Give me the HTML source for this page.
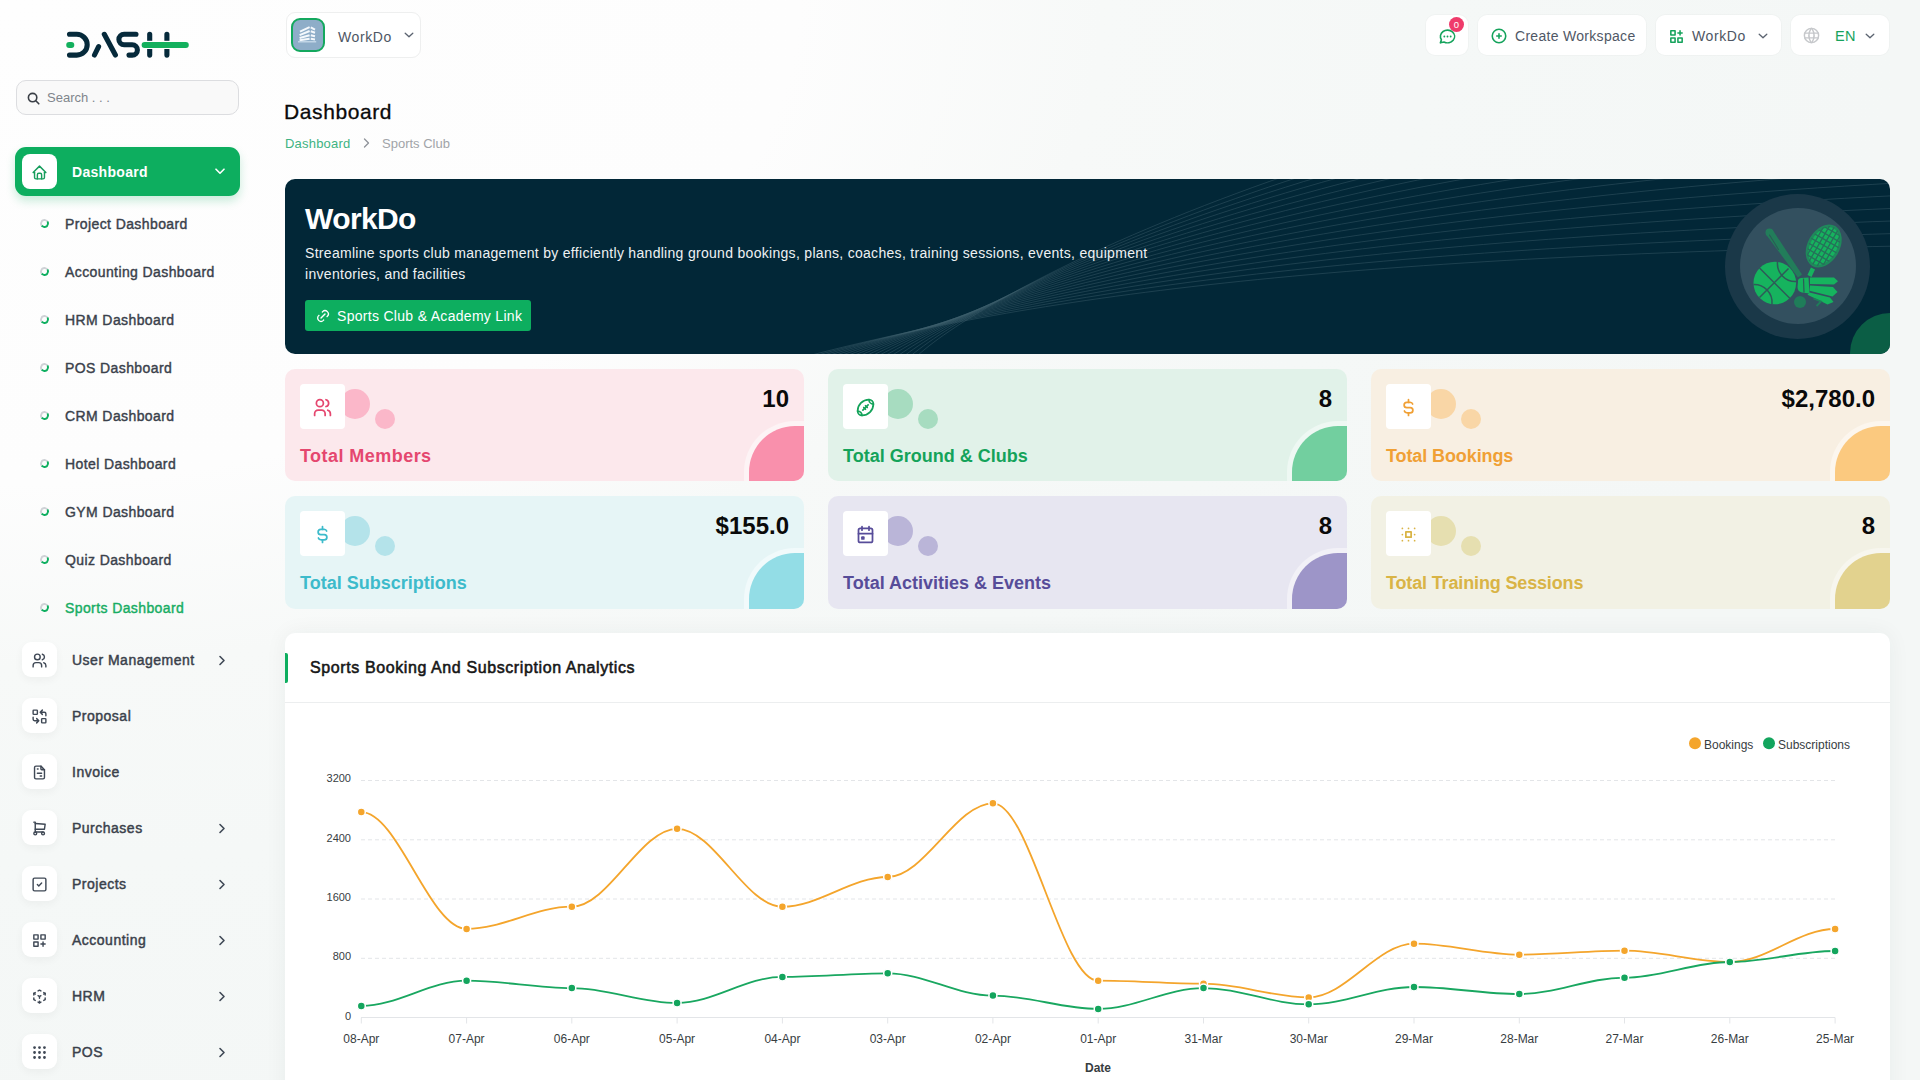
<!DOCTYPE html>
<html><head><meta charset="utf-8">
<style>
*{box-sizing:border-box;margin:0;padding:0}
html,body{width:1920px;height:1080px;overflow:hidden}
body{font-family:"Liberation Sans",sans-serif;position:relative;background:radial-gradient(ellipse 1900px 1150px at 0 0,#fefefe 0%,#fdfdfd 42%,#f7f9f8 58%,#f5f8f7 75%,#f4f7f6 100%)}
.abs{position:absolute}
svg{display:block}
/* sidebar */
.search{left:16px;top:80px;width:223px;height:35px;border:1px solid #dcdde0;border-radius:10px;background:#f9f9f9}
.search span{position:absolute;left:30px;top:9px;font-size:13px;color:#80858c;letter-spacing:0}
.nav-active{left:15px;top:147px;width:225px;height:49px;border-radius:11px;background:#0dae5f;box-shadow:0 5px 10px rgba(13,174,95,.22)}
.nav-active .ib{position:absolute;left:7px;top:7px;width:35px;height:35px;background:#fff;border-radius:8px}
.nav-active .t{position:absolute;left:57px;top:17px;font-size:14px;font-weight:700;color:#fff;letter-spacing:.3px}
.sub{left:0;width:250px;height:20px}
.sub .dot{position:absolute;left:40px;top:6px;width:9px;height:9px;border-radius:50%;border:2px solid #cfd2d6;border-right-color:#0dae5f;border-bottom-color:#0dae5f;transform:rotate(10deg)}
.sub .t{position:absolute;left:65px;top:3px;font-size:14px;font-weight:400;color:#3a414b;-webkit-text-stroke:.4px #3a414b;letter-spacing:.4px;white-space:nowrap}
.sub.on .t{color:#17ad63;-webkit-text-stroke-color:#17ad63}
.mi{left:0;width:250px;height:35px}
.mi .ib{position:absolute;left:22px;top:0;width:35px;height:35px;background:#fff;border-radius:9px;box-shadow:0 3px 8px rgba(0,0,0,.045)}
.mi .ib svg{position:absolute;left:9px;top:10px}
.mi .t{position:absolute;left:72px;top:10px;font-size:14px;font-weight:400;color:#3a414b;-webkit-text-stroke:.45px #3a414b;white-space:nowrap;letter-spacing:.5px}
.mi .chev{position:absolute;left:218px;top:13px}
/* header */
.hbox{top:15px;height:40px;background:#fff;border-radius:9px;box-shadow:0 0 0 1px rgba(0,0,0,.02)}
.htxt{position:absolute;top:13px;font-size:14px;color:#505866;white-space:nowrap;letter-spacing:.3px}
.card{width:519px;height:112px;border-radius:10px;overflow:hidden}
.cib{left:15px;top:15px;width:45px;height:45px;border-radius:4px;background:#fff}
.cnum{right:15px;top:16px;font-size:24px;font-weight:700;color:#0a0a0a;white-space:nowrap}
.clab{left:15px;top:77px;font-size:18px;font-weight:700;white-space:nowrap}
.ccorner{left:464px;top:57px;width:60px;height:60px;border-top-left-radius:46px}
</style></head>
<body>

<!-- LOGO -->
<svg class="abs" style="left:60px;top:28px" width="135" height="34" viewBox="60 28 135 34">
  <g fill="none" stroke="#062a3b" stroke-width="5.1" stroke-linecap="round">
    <path d="M69.5 34.3 H76.8 A10.4 10.4 0 0 1 76.8 55.1 H69.5"/>
    <path d="M94.5 55 L98.6 46.6"/>
    <path d="M104.3 34.3 L115.4 55"/>
    <path d="M136 34.3 H124.1 A5.2 5.2 0 0 0 124.1 44.7 H132.2 A5.2 5.2 0 0 1 132.2 55.1 H129"/>
    <path d="M149.7 34.3 V55.1 M166.9 34.3 V55.1"/>
  </g>
  <path d="M146 44.9 H171" stroke="#fff" stroke-width="8.2"/>
  <g stroke="#13b05d" stroke-width="6" stroke-linecap="round">
    <path d="M69.2 44.9 H71.3"/>
    <path d="M144.6 44.9 H185.8"/>
  </g>
</svg>

<div class="abs search">
  <svg class="abs" style="left:10px;top:11px" width="13" height="13" viewBox="0 0 13 13"><circle cx="5.6" cy="5.6" r="4.2" fill="none" stroke="#3a3f46" stroke-width="1.6"/><path d="M8.8 8.8 L11.8 11.8" stroke="#3a3f46" stroke-width="1.6" stroke-linecap="round"/></svg>
  <span>Search . . .</span>
</div>

<div class="abs nav-active">
  <div class="ib"><svg class="abs" style="left:9px;top:10px" width="17" height="17" viewBox="0 0 24 24" fill="none" stroke="#169d5c" stroke-width="2" stroke-linecap="round" stroke-linejoin="round"><path d="M5 12H3l9-9 9 9h-2"/><path d="M5 12v7a2 2 0 0 0 2 2h10a2 2 0 0 0 2-2v-7"/><path d="M9 21v-6a2 2 0 0 1 2-2h2a2 2 0 0 1 2 2v6"/></svg></div>
  <div class="t">Dashboard</div>
  <svg class="abs" style="left:200px;top:21px" width="10" height="7" viewBox="0 0 10 7"><path d="M1 1.2 L5 5.2 L9 1.2" fill="none" stroke="#fff" stroke-width="1.6" stroke-linecap="round" stroke-linejoin="round"/></svg>
</div>

<div class="abs sub" style="top:213px"><div class="dot"></div><div class="t">Project Dashboard</div></div>
<div class="abs sub" style="top:261px"><div class="dot"></div><div class="t">Accounting Dashboard</div></div>
<div class="abs sub" style="top:309px"><div class="dot"></div><div class="t">HRM Dashboard</div></div>
<div class="abs sub" style="top:357px"><div class="dot"></div><div class="t">POS Dashboard</div></div>
<div class="abs sub" style="top:405px"><div class="dot"></div><div class="t">CRM Dashboard</div></div>
<div class="abs sub" style="top:453px"><div class="dot"></div><div class="t">Hotel Dashboard</div></div>
<div class="abs sub" style="top:501px"><div class="dot"></div><div class="t">GYM Dashboard</div></div>
<div class="abs sub" style="top:549px"><div class="dot"></div><div class="t">Quiz Dashboard</div></div>
<div class="abs sub on" style="top:597px"><div class="dot"></div><div class="t">Sports Dashboard</div></div>

<!--MENU-->
<div class="abs mi" style="top:642px"><div class="ib"><svg width="17" height="17" viewBox="0 0 24 24" fill="none" stroke="#3f4855" stroke-width="2" stroke-linecap="round" stroke-linejoin="round"><circle cx="9" cy="7" r="4"/><path d="M3 21v-2a4 4 0 0 1 4-4h4a4 4 0 0 1 4 4v2"/><path d="M16 3.13a4 4 0 0 1 0 7.75"/><path d="M21 21v-2a4 4 0 0 0-3-3.85"/></svg></div><div class="t">User Management</div><svg class="chev" width="8" height="11" viewBox="0 0 8 11"><path d="M2 1.5 L6 5.5 L2 9.5" fill="none" stroke="#3f4855" stroke-width="1.6" stroke-linecap="round" stroke-linejoin="round"/></svg></div>
<div class="abs mi" style="top:698px"><div class="ib"><svg width="17" height="17" viewBox="0 0 24 24" fill="none" stroke="#3f4855" stroke-width="2" stroke-linecap="round" stroke-linejoin="round"><path d="M3 4a1 1 0 0 1 1-1h4a1 1 0 0 1 1 1v4a1 1 0 0 1-1 1H4a1 1 0 0 1-1-1z"/><path d="M15 16a1 1 0 0 1 1-1h4a1 1 0 0 1 1 1v4a1 1 0 0 1-1 1h-4a1 1 0 0 1-1-1z"/><path d="M21 11V8a2 2 0 0 0-2-2h-6l3 3m0-6l-3 3"/><path d="M3 13v3a2 2 0 0 0 2 2h6l-3-3m0 6l3-3"/></svg></div><div class="t">Proposal</div></div>
<div class="abs mi" style="top:754px"><div class="ib"><svg width="17" height="17" viewBox="0 0 24 24" fill="none" stroke="#3f4855" stroke-width="2" stroke-linecap="round" stroke-linejoin="round"><path d="M14 3v4a1 1 0 0 0 1 1h4"/><path d="M17 21H7a2 2 0 0 1-2-2V5a2 2 0 0 1 2-2h7l5 5v11a2 2 0 0 1-2 2z"/><path d="M9 7h1"/><path d="M9 13h6"/><path d="M13 17h2"/></svg></div><div class="t">Invoice</div></div>
<div class="abs mi" style="top:810px"><div class="ib"><svg width="17" height="17" viewBox="0 0 24 24" fill="none" stroke="#3f4855" stroke-width="2" stroke-linecap="round" stroke-linejoin="round"><circle cx="6" cy="19" r="2"/><circle cx="17" cy="19" r="2"/><path d="M17 17H6V3H4"/><path d="M6 5l14 1-1 7H6"/></svg></div><div class="t">Purchases</div><svg class="chev" width="8" height="11" viewBox="0 0 8 11"><path d="M2 1.5 L6 5.5 L2 9.5" fill="none" stroke="#3f4855" stroke-width="1.6" stroke-linecap="round" stroke-linejoin="round"/></svg></div>
<div class="abs mi" style="top:866px"><div class="ib"><svg width="17" height="17" viewBox="0 0 24 24" fill="none" stroke="#3f4855" stroke-width="2" stroke-linecap="round" stroke-linejoin="round"><path d="M3 5a2 2 0 0 1 2-2h14a2 2 0 0 1 2 2v14a2 2 0 0 1-2 2H5a2 2 0 0 1-2-2z"/><path d="M9 12l2 2 4-4"/></svg></div><div class="t">Projects</div><svg class="chev" width="8" height="11" viewBox="0 0 8 11"><path d="M2 1.5 L6 5.5 L2 9.5" fill="none" stroke="#3f4855" stroke-width="1.6" stroke-linecap="round" stroke-linejoin="round"/></svg></div>
<div class="abs mi" style="top:922px"><div class="ib"><svg width="17" height="17" viewBox="0 0 24 24" fill="none" stroke="#3f4855" stroke-width="2" stroke-linecap="round" stroke-linejoin="round"><path d="M4 4h6v6H4z"/><path d="M14 4h6v6h-6z"/><path d="M4 14h6v6H4z"/><path d="M14 17h6m-3-3v6"/></svg></div><div class="t">Accounting</div><svg class="chev" width="8" height="11" viewBox="0 0 8 11"><path d="M2 1.5 L6 5.5 L2 9.5" fill="none" stroke="#3f4855" stroke-width="1.6" stroke-linecap="round" stroke-linejoin="round"/></svg></div>
<div class="abs mi" style="top:978px"><div class="ib"><svg width="17" height="17" viewBox="0 0 24 24" fill="none" stroke="#3f4855" stroke-width="2" stroke-linecap="round" stroke-linejoin="round"><path d="M6 17.6l-2-1.1V14"/><path d="M4 10V7.5l2-1.1"/><path d="M10 4.1L12 3l2 1.1"/><path d="M18 6.4l2 1.1V10"/><path d="M20 14v2.5l-2 1.12"/><path d="M14 19.9L12 21l-2-1.1"/><path d="M12 12l2-1.1"/><path d="M18 8.6l2-1.1"/><path d="M12 12v2.5"/><path d="M12 18.5V21"/><path d="M12 12l-2-1.12"/><path d="M6 8.6L4 7.5"/></svg></div><div class="t">HRM</div><svg class="chev" width="8" height="11" viewBox="0 0 8 11"><path d="M2 1.5 L6 5.5 L2 9.5" fill="none" stroke="#3f4855" stroke-width="1.6" stroke-linecap="round" stroke-linejoin="round"/></svg></div>
<div class="abs mi" style="top:1034px"><div class="ib"><svg width="17" height="17" viewBox="0 0 24 24" fill="none" stroke="#3f4855" stroke-width="2" stroke-linecap="round" stroke-linejoin="round"><circle cx="5" cy="5" r="1"/><circle cx="12" cy="5" r="1"/><circle cx="19" cy="5" r="1"/><circle cx="5" cy="12" r="1"/><circle cx="12" cy="12" r="1"/><circle cx="19" cy="12" r="1"/><circle cx="5" cy="19" r="1"/><circle cx="12" cy="19" r="1"/><circle cx="19" cy="19" r="1"/></svg></div><div class="t">POS</div><svg class="chev" width="8" height="11" viewBox="0 0 8 11"><path d="M2 1.5 L6 5.5 L2 9.5" fill="none" stroke="#3f4855" stroke-width="1.6" stroke-linecap="round" stroke-linejoin="round"/></svg></div>


<!--HEADER-->
<div class="abs" style="left:286px;top:12px;width:135px;height:46px;border:1px solid #eeefef;border-radius:9px;background:#fff">
  <div class="abs" style="left:4px;top:5px;width:34px;height:34px;border:2.2px solid #14a85e;border-radius:9px;background:#8eadc8">
    <svg class="abs" style="left:-2.2px;top:-2.2px" width="34" height="34" viewBox="291 18 34 34"><g fill="none" stroke="#f4f8fc" stroke-width="2" stroke-linecap="butt">
<path d="M300 31.6 L309.6 27.2"/><path d="M299.6 35.2 L309.6 31"/><path d="M299.6 38 L309.6 35.2"/><path d="M299.6 40.2 L309.6 38.8"/>
<path d="M310.8 27.4 L315 29.6"/><path d="M310.8 31.2 L315 32.8"/><path d="M310.8 35.2 L315 36.2"/><path d="M310.8 38.8 L315 39.4"/>
</g><path d="M298 41.8 H316.2" stroke="#c9dceb" stroke-width="1.3"/></svg>
  </div>
  <div class="htxt" style="left:51px;top:15.5px;color:#4e5664;letter-spacing:.6px">WorkDo</div>
  <svg class="abs" style="left:117px;top:19px" width="10" height="7" viewBox="0 0 10 7"><path d="M1.2 1.2 L5 4.8 L8.8 1.2" fill="none" stroke="#5b6370" stroke-width="1.3" stroke-linecap="round" stroke-linejoin="round"/></svg>
</div>

<div class="abs hbox" style="left:1426px;width:42px">
  <svg class="abs" style="left:12px;top:12px" width="19" height="19" viewBox="0 0 24 24" fill="none" stroke="#15a35c" stroke-width="2" stroke-linecap="round" stroke-linejoin="round"><path d="M3 20l1.3-3.9C2 12.7 2.9 8.2 6.4 5.7c3.5-2.5 8.6-2.3 11.8.5 3.3 2.8 3.7 7.3 1 10.5-2.7 3.2-7.6 4.2-11.6 2.3L3 20"/><path d="M8 12h.01M12 12h.01M16 12h.01" stroke-width="2.4"/></svg>
  <div class="abs" style="left:23px;top:2px;width:15px;height:15px;border-radius:50%;background:#ef3b6b;color:#fff;font-size:9.5px;line-height:15px;text-align:center">0</div>
</div>

<div class="abs hbox" style="left:1478px;width:168px">
  <svg class="abs" style="left:12px;top:12px" width="18" height="18" viewBox="0 0 24 24" fill="none" stroke="#15a35c" stroke-width="2.1" stroke-linecap="round"><circle cx="12" cy="12" r="9"/><path d="M9 12h6M12 9v6"/></svg>
  <div class="htxt" style="left:37px">Create Workspace</div>
</div>

<div class="abs hbox" style="left:1656px;width:125px">
  <svg class="abs" style="left:12px;top:13px" width="17" height="17" viewBox="0 0 24 24" fill="none" stroke="#15a35c" stroke-width="2.2" stroke-linecap="round" stroke-linejoin="round"><path d="M4 4h6v6H4z"/><path d="M4 14h6v6H4z"/><path d="M14 14h6v6h-6z"/><path d="M14 7h6M17 4v6"/></svg>
  <div class="htxt" style="left:36px;color:#4e5664;letter-spacing:.6px">WorkDo</div>
  <svg class="abs" style="left:102px;top:18px" width="10" height="7" viewBox="0 0 10 7"><path d="M1.2 1.2 L5 4.8 L8.8 1.2" fill="none" stroke="#5b6370" stroke-width="1.3" stroke-linecap="round" stroke-linejoin="round"/></svg>
</div>

<div class="abs hbox" style="left:1791px;width:98px">
  <svg class="abs" style="left:11px;top:11px" width="19" height="19" viewBox="0 0 24 24" fill="none" stroke="#c6c8cb" stroke-width="1.8" stroke-linecap="round" stroke-linejoin="round"><circle cx="12" cy="12" r="9"/><path d="M3.6 9h16.8M3.6 15h16.8"/><path d="M11.5 3a17 17 0 0 0 0 18M12.5 3a17 17 0 0 1 0 18"/></svg>
  <div class="htxt" style="left:44px;color:#16a35d;font-size:14.5px">EN</div>
  <svg class="abs" style="left:74px;top:18px" width="10" height="7" viewBox="0 0 10 7"><path d="M1.2 1.2 L5 4.8 L8.8 1.2" fill="none" stroke="#5b6370" stroke-width="1.3" stroke-linecap="round" stroke-linejoin="round"/></svg>
</div>

<div class="abs" style="left:284px;top:100px;font-size:21px;color:#0a0a0a;-webkit-text-stroke:.3px #0a0a0a;letter-spacing:.6px;white-space:nowrap">Dashboard</div>
<div class="abs" style="left:285px;top:136px;font-size:13px;color:#3fb383;letter-spacing:.2px">Dashboard</div>
<svg class="abs" style="left:363px;top:138px" width="7" height="10" viewBox="0 0 7 10"><path d="M1.5 1 L5.5 5 L1.5 9" fill="none" stroke="#8e9299" stroke-width="1.3" stroke-linecap="round" stroke-linejoin="round"/></svg>
<div class="abs" style="left:382px;top:136px;font-size:13px;color:#a1a4a8;white-space:nowrap">Sports Club</div>


<!--MAIN-->
<div class="abs" style="left:285px;top:179px;width:1605px;height:175px;border-radius:10px;background:#022737;overflow:hidden">
  <svg class="abs" style="left:-285px;top:-179px" width="1920" height="540" viewBox="0 0 1920 540"><g fill="none" stroke="#3d5f6c" stroke-opacity=".45" stroke-width="1"><path d="M800.0 358 C1021.0 300.2 1300.0 258.0 1900 246.0"/><path d="M806.8 358 C1016.0 299.8 1300.0 249.8 1900 233.4"/><path d="M813.5 358 C1011.2 299.5 1300.0 241.5 1900 220.7"/><path d="M820.3 358 C1006.8 299.2 1300.0 233.3 1900 208.1"/><path d="M827.1 358 C1002.6 299.0 1300.0 225.1 1900 195.4"/><path d="M833.8 358 C998.7 298.8 1300.0 216.8 1900 182.8"/><path d="M840.6 358 C995.1 298.7 1300.0 208.6 1900 170.1"/><path d="M847.4 358 C991.8 298.6 1300.0 200.4 1900 157.5"/><path d="M854.1 358 C988.7 298.6 1300.0 192.1 1900 144.8"/><path d="M860.9 358 C985.9 298.6 1300.0 183.9 1900 132.2"/><path d="M867.6 358 C983.4 298.6 1300.0 175.6 1900 119.5"/><path d="M874.4 358 C981.2 298.7 1300.0 167.4 1900 106.9"/><path d="M881.2 358 C979.3 298.9 1300.0 159.2 1900 94.2"/><path d="M887.9 358 C977.6 299.1 1300.0 150.9 1900 81.6"/><path d="M894.7 358 C976.2 299.3 1300.0 142.7 1900 68.9"/><path d="M901.5 358 C975.1 299.6 1300.0 134.5 1900 56.3"/><path d="M908.2 358 C974.3 300.0 1300.0 126.2 1900 43.6"/><path d="M915.0 358 C973.8 300.4 1300.0 118.0 1900 31.0"/></g></svg>
  <div class="abs" style="left:1440px;top:15px;width:145px;height:145px;border-radius:50%;background:#1a3848"></div>
  <div class="abs" style="left:1455px;top:29px;width:116px;height:116px;border-radius:50%;background:#33505f"></div>
  <svg class="abs" style="left:-285px;top:-179px" width="1920" height="540" viewBox="0 0 1920 540">
    <defs><clipPath id="rk"><ellipse cx="1823.7" cy="246" rx="14.5" ry="21.5" transform="rotate(30 1823.7 246)"/></clipPath></defs>
    <!-- bat -->
    <path d="M1772.8 230.2 L1802 274.6 L1798 277.4 L1766.2 234.8 Z" fill="#227d5a"/>
    <circle cx="1769.5" cy="232.5" r="4" fill="#227d5a"/>
    <path d="M1769.5 235 L1778.5 249.5" stroke="#2b5a55" stroke-width="1.1" stroke-linecap="round"/>
    <!-- racket -->
    <ellipse cx="1823.7" cy="246" rx="16" ry="23" transform="rotate(30 1823.7 246)" fill="#1f8a5b"/>
    <ellipse cx="1823.7" cy="246" rx="13.2" ry="20.2" transform="rotate(30 1823.7 246)" fill="#16b35e"/>
    <g clip-path="url(#rk)" stroke="#26705a" stroke-width="1.3"><g transform="rotate(30 1823.7 246)">
      <path d="M1814 220 V272 M1818.7 220 V272 M1823.4 220 V272 M1828.1 220 V272 M1832.8 220 V272"/>
      <path d="M1800 229 H1848 M1800 234.5 H1848 M1800 240 H1848 M1800 245.5 H1848 M1800 251 H1848 M1800 256.5 H1848 M1800 262 H1848"/>
    </g></g>
    <path d="M1813 268.5 L1809.5 276" stroke="#16b35e" stroke-width="4.5" stroke-linecap="butt"/>
    <!-- basketball -->
    <circle cx="1774.8" cy="283" r="21.3" fill="#16b35e"/>
    <g fill="none" stroke="#2e5a58" stroke-width="1.5">
      <path d="M1759.5 268 L1790 298.5 M1788.5 268.5 L1759.5 297.5"/>
      <path d="M1777.5 262 A18 18 0 0 0 1796 281.5"/>
      <path d="M1753.5 284.5 A18 18 0 0 1 1772 304"/>
    </g>
    <!-- shuttlecock -->
    <path d="M1798 282 Q1797.5 278.5 1801 278 L1808.5 277.6 L1809.5 293.5 L1802 292.5 Q1797.5 291.5 1797.5 287 Z" fill="#16b35e"/>
    <path d="M1803.5 278.5 L1804 292.5" stroke="#2e5a58" stroke-width="1.2"/>
    <g fill="#16b35e">
      <path d="M1810 277.6 L1834 277.6 L1838 281.2 L1834 284.6 L1810 284 Z"/>
      <path d="M1810 285.6 L1833 287 L1837.5 292 L1832.5 296.5 L1809.5 290.8 Z"/>
      <path d="M1809.5 292.5 L1830 297.6 L1833.5 302 L1827.5 304.5 L1807.5 294.8 Z"/>
    </g>
    <circle cx="1800" cy="302" r="6" fill="#1f7d59"/>
    <path d="M1813.5 298.5 L1821 301.5 L1816.5 306" stroke="#1f7d59" stroke-width="1.8" fill="none"/>
  </svg>
  <div class="abs" style="left:1565px;top:134px;width:40px;height:41px;border-top-left-radius:40px;background:#0b5e45"></div>
  <div class="abs" style="left:20px;top:23px;font-size:30px;font-weight:700;color:#fff;white-space:nowrap;letter-spacing:-.6px">WorkDo</div>
  <div class="abs" style="left:20px;top:64px;font-size:14px;line-height:21px;color:#eef1f3;letter-spacing:.3px;white-space:nowrap">Streamline sports club management by efficiently handling ground bookings, plans, coaches, training sessions, events, equipment<br>inventories, and facilities</div>
  <div class="abs" style="left:20px;top:121px;width:226px;height:31px;border-radius:3px;background:#0dae5f">
    <svg class="abs" style="left:10px;top:8px" width="16" height="16" viewBox="0 0 24 24" fill="none" stroke="#fff" stroke-width="2" stroke-linecap="round" stroke-linejoin="round"><path d="M9 15l6-6"/><path d="M11 6l.463-.536a5 5 0 0 1 7.071 7.072L18 13"/><path d="M13 18l-.397.534a5.068 5.068 0 0 1-7.127 0 4.972 4.972 0 0 1 0-7.071L6 11"/></svg>
    <div class="abs" style="left:32px;top:8px;font-size:14px;color:#fff;letter-spacing:.3px;white-space:nowrap">Sports Club &amp; Academy Link</div>
  </div>
</div>
<div class="abs card" style="left:285px;top:369px;background:#fce8ec">
  <div class="abs" style="left:55px;top:20px;width:30px;height:30px;border-radius:50%;background:#fbb7c9"></div>
  <div class="abs" style="left:90px;top:40px;width:20px;height:20px;border-radius:50%;background:#fbb7c9"></div>
  <div class="abs cib"><svg class="abs" style="left:12px;top:13px" width="21" height="21" viewBox="0 0 24 24" fill="none" stroke="#e5476f" stroke-width="2" stroke-linecap="round" stroke-linejoin="round"><circle cx="9" cy="7" r="4"/><path d="M3 21v-2a4 4 0 0 1 4-4h4a4 4 0 0 1 4 4v2"/><path d="M16 3.13a4 4 0 0 1 0 7.75"/><path d="M21 21v-2a4 4 0 0 0-3-3.85"/></svg></div>
  <div class="abs cnum">10</div>
  <div class="abs clab" style="letter-spacing:.45px;color:#e5476f">Total Members</div>
  <div class="abs ccorner" style="background:#f990ac;box-shadow:0 0 0 5px #fdf3f5"></div>
</div>
<div class="abs card" style="left:828px;top:369px;background:#e1f2e9">
  <div class="abs" style="left:55px;top:20px;width:30px;height:30px;border-radius:50%;background:#a7dcc0"></div>
  <div class="abs" style="left:90px;top:40px;width:20px;height:20px;border-radius:50%;background:#a7dcc0"></div>
  <div class="abs cib"><svg class="abs" style="left:12px;top:13px" width="21" height="21" viewBox="0 0 24 24" fill="none" stroke="#14a35a" stroke-width="2" stroke-linecap="round" stroke-linejoin="round"><path d="M15 9l-6 6"/><path d="M10 12l2 2"/><path d="M12 10l2 2"/><path d="M8 21a5 5 0 0 0-5-5"/><path d="M16 3C8.82 3 3 8.82 3 16a5 5 0 0 0 5 5c7.18 0 13-5.82 13-13a5 5 0 0 0-5-5"/><path d="M16 3a5 5 0 0 0 5 5"/></svg></div>
  <div class="abs cnum">8</div>
  <div class="abs clab" style="color:#14a35a">Total Ground &amp; Clubs</div>
  <div class="abs ccorner" style="background:#72cf9f;box-shadow:0 0 0 5px #eef8f3"></div>
</div>
<div class="abs card" style="left:1371px;top:369px;background:#f8efe2">
  <div class="abs" style="left:55px;top:20px;width:30px;height:30px;border-radius:50%;background:#f9d6a6"></div>
  <div class="abs" style="left:90px;top:40px;width:20px;height:20px;border-radius:50%;background:#f9d6a6"></div>
  <div class="abs cib"><svg class="abs" style="left:12px;top:13px" width="21" height="21" viewBox="0 0 24 24" fill="none" stroke="#f0a035" stroke-width="2" stroke-linecap="round" stroke-linejoin="round"><path d="M16.7 8a3 3 0 0 0-2.7-2h-4a3 3 0 0 0 0 6h4a3 3 0 0 1 0 6h-4a3 3 0 0 1-2.7-2"/><path d="M12 3v3m0 12v3"/></svg></div>
  <div class="abs cnum">$2,780.0</div>
  <div class="abs clab" style="letter-spacing:-.1px;color:#f0a035">Total Bookings</div>
  <div class="abs ccorner" style="background:#fbc97f;box-shadow:0 0 0 5px #fcf6ee"></div>
</div>
<div class="abs card" style="height:113px;left:285px;top:496px;background:#e6f5f6">
  <div class="abs" style="left:55px;top:20px;width:30px;height:30px;border-radius:50%;background:#b4e3ea"></div>
  <div class="abs" style="left:90px;top:40px;width:20px;height:20px;border-radius:50%;background:#b4e3ea"></div>
  <div class="abs cib"><svg class="abs" style="left:12px;top:13px" width="21" height="21" viewBox="0 0 24 24" fill="none" stroke="#3dbbcb" stroke-width="2" stroke-linecap="round" stroke-linejoin="round"><path d="M16.7 8a3 3 0 0 0-2.7-2h-4a3 3 0 0 0 0 6h4a3 3 0 0 1 0 6h-4a3 3 0 0 1-2.7-2"/><path d="M12 3v3m0 12v3"/></svg></div>
  <div class="abs cnum">$155.0</div>
  <div class="abs clab" style="color:#3dbbcb">Total Subscriptions</div>
  <div class="abs ccorner" style="background:#93dde6;box-shadow:0 0 0 5px #f1fafb"></div>
</div>
<div class="abs card" style="height:113px;left:828px;top:496px;background:#e7e6f1">
  <div class="abs" style="left:55px;top:20px;width:30px;height:30px;border-radius:50%;background:#bab5d8"></div>
  <div class="abs" style="left:90px;top:40px;width:20px;height:20px;border-radius:50%;background:#bab5d8"></div>
  <div class="abs cib"><svg class="abs" style="left:12px;top:13px" width="21" height="21" viewBox="0 0 24 24" fill="none" stroke="#574c99" stroke-width="2" stroke-linecap="round" stroke-linejoin="round"><path d="M4 7a2 2 0 0 1 2-2h12a2 2 0 0 1 2 2v12a2 2 0 0 1-2 2H6a2 2 0 0 1-2-2z"/><path d="M16 3v4"/><path d="M8 3v4"/><path d="M4 11h16"/><path d="M8 15h2v2H8z"/></svg></div>
  <div class="abs cnum">8</div>
  <div class="abs clab" style="color:#574c99">Total Activities &amp; Events</div>
  <div class="abs ccorner" style="background:#9d95c8;box-shadow:0 0 0 5px #f2f1f7"></div>
</div>
<div class="abs card" style="height:113px;left:1371px;top:496px;background:#f2f1e4">
  <div class="abs" style="left:55px;top:20px;width:30px;height:30px;border-radius:50%;background:#e6dfb0"></div>
  <div class="abs" style="left:90px;top:40px;width:20px;height:20px;border-radius:50%;background:#e6dfb0"></div>
  <div class="abs cib"><svg class="abs" style="left:12px;top:13px" width="21" height="21" viewBox="0 0 24 24" fill="none" stroke="#d9b446" stroke-width="2" stroke-linecap="round" stroke-linejoin="round"><path d="M9 9h6v6H9z"/><path d="M5 5v.01M5 12v.01M5 19v.01M12 5v.01M12 19v.01M19 5v.01M19 12v.01M19 19v.01"/></svg></div>
  <div class="abs cnum">8</div>
  <div class="abs clab" style="letter-spacing:-.15px;color:#d9b446">Total Training Sessions</div>
  <div class="abs ccorner" style="background:#e2d28e;box-shadow:0 0 0 5px #f7f6ee"></div>
</div>
<!--CHART-->
<div class="abs" style="left:285px;top:633px;width:1605px;height:520px;border-radius:10px;background:#fff;box-shadow:0 0 22px rgba(30,50,60,.055)">
  <div class="abs" style="left:0;top:20px;width:3px;height:30px;background:#0dae5f;border-radius:0 2px 2px 0"></div>
  <div class="abs" style="left:25px;top:26px;font-size:16px;font-weight:400;color:#161616;-webkit-text-stroke:.55px #161616;letter-spacing:.6px;white-space:nowrap">Sports Booking And Subscription Analytics</div>
  <div class="abs" style="left:0;top:69px;width:1605px;height:1px;background:#eceeef"></div>
</div>
<svg class="abs" style="left:0;top:0" width="1920" height="1080" viewBox="0 0 1920 1080">
  <g stroke="#e3e5e8" stroke-width="1" stroke-dasharray="4 3"><line x1="361" y1="780.5" x2="1835" y2="780.5"/><line x1="361" y1="839.8" x2="1835" y2="839.8"/><line x1="361" y1="899.0" x2="1835" y2="899.0"/><line x1="361" y1="958.3" x2="1835" y2="958.3"/></g>
  <line x1="361" y1="1017.5" x2="1835" y2="1017.5" stroke="#e3e5e8" stroke-width="1"/>
  <g stroke="#e3e5e8" stroke-width="1"><line x1="361.3" y1="1017.5" x2="361.3" y2="1023.5"/><line x1="466.6" y1="1017.5" x2="466.6" y2="1023.5"/><line x1="571.8" y1="1017.5" x2="571.8" y2="1023.5"/><line x1="677.1" y1="1017.5" x2="677.1" y2="1023.5"/><line x1="782.4" y1="1017.5" x2="782.4" y2="1023.5"/><line x1="887.7" y1="1017.5" x2="887.7" y2="1023.5"/><line x1="992.9" y1="1017.5" x2="992.9" y2="1023.5"/><line x1="1098.2" y1="1017.5" x2="1098.2" y2="1023.5"/><line x1="1203.5" y1="1017.5" x2="1203.5" y2="1023.5"/><line x1="1308.7" y1="1017.5" x2="1308.7" y2="1023.5"/><line x1="1414.0" y1="1017.5" x2="1414.0" y2="1023.5"/><line x1="1519.3" y1="1017.5" x2="1519.3" y2="1023.5"/><line x1="1624.5" y1="1017.5" x2="1624.5" y2="1023.5"/><line x1="1729.8" y1="1017.5" x2="1729.8" y2="1023.5"/><line x1="1835.1" y1="1017.5" x2="1835.1" y2="1023.5"/></g>
  <g font-family="Liberation Sans" font-size="11" fill="#373d3f" text-anchor="end"><text x="351" y="782">3200</text><text x="351" y="841.5">2400</text><text x="351" y="901">1600</text><text x="351" y="960">800</text><text x="351" y="1019.5">0</text></g>
  <g font-family="Liberation Sans" font-size="12" fill="#373d3f" text-anchor="middle"><text x="361.3" y="1043">08-Apr</text><text x="466.6" y="1043">07-Apr</text><text x="571.8" y="1043">06-Apr</text><text x="677.1" y="1043">05-Apr</text><text x="782.4" y="1043">04-Apr</text><text x="887.7" y="1043">03-Apr</text><text x="992.9" y="1043">02-Apr</text><text x="1098.2" y="1043">01-Apr</text><text x="1203.5" y="1043">31-Mar</text><text x="1308.7" y="1043">30-Mar</text><text x="1414.0" y="1043">29-Mar</text><text x="1519.3" y="1043">28-Mar</text><text x="1624.5" y="1043">27-Mar</text><text x="1729.8" y="1043">26-Mar</text><text x="1835.1" y="1043">25-Mar</text></g>
  <text x="1098" y="1072" font-family="Liberation Sans" font-size="12" font-weight="700" fill="#373d3f" text-anchor="middle">Date</text>
  <path d="M361.3 812.1 C398.1 812.1 429.7 928.9 466.6 928.9 C503.4 928.9 535.0 906.7 571.8 906.7 C608.7 906.7 640.3 828.8 677.1 828.8 C714.0 828.8 745.5 906.7 782.4 906.7 C819.2 906.7 850.8 877.0 887.7 877.0 C924.5 877.0 956.1 803.3 992.9 803.3 C1029.8 803.3 1061.3 980.7 1098.2 980.7 C1135.0 980.7 1166.6 983.7 1203.5 983.7 C1240.3 983.7 1271.9 997.4 1308.7 997.4 C1345.6 997.4 1377.2 943.7 1414.0 943.7 C1450.8 943.7 1482.4 954.7 1519.3 954.7 C1556.1 954.7 1587.7 950.7 1624.5 950.7 C1661.4 950.7 1693.0 962.0 1729.8 962.0 C1766.7 962.0 1798.2 929.0 1835.1 929.0" fill="none" stroke="#f4a52c" stroke-width="1.8"/>
  <path d="M361.3 1005.9 C398.1 1005.9 429.7 980.7 466.6 980.7 C503.4 980.7 535.0 988.1 571.8 988.1 C608.7 988.1 640.3 1003.0 677.1 1003.0 C714.0 1003.0 745.5 976.9 782.4 976.9 C819.2 976.9 850.8 973.3 887.7 973.3 C924.5 973.3 956.1 995.6 992.9 995.6 C1029.8 995.6 1061.3 1008.9 1098.2 1008.9 C1135.0 1008.9 1166.6 988.1 1203.5 988.1 C1240.3 988.1 1271.9 1004.3 1308.7 1004.3 C1345.6 1004.3 1377.2 987.0 1414.0 987.0 C1450.8 987.0 1482.4 994.0 1519.3 994.0 C1556.1 994.0 1587.7 977.7 1624.5 977.7 C1661.4 977.7 1693.0 962.0 1729.8 962.0 C1766.7 962.0 1798.2 951.0 1835.1 951.0" fill="none" stroke="#19a760" stroke-width="1.8"/>
  <g fill="#f4a52c" stroke="#fff" stroke-width="1.5"><circle cx="361.3" cy="812.1" r="4"/><circle cx="466.6" cy="928.9" r="4"/><circle cx="571.8" cy="906.7" r="4"/><circle cx="677.1" cy="828.8" r="4"/><circle cx="782.4" cy="906.7" r="4"/><circle cx="887.7" cy="877.0" r="4"/><circle cx="992.9" cy="803.3" r="4"/><circle cx="1098.2" cy="980.7" r="4"/><circle cx="1203.5" cy="983.7" r="4"/><circle cx="1308.7" cy="997.4" r="4"/><circle cx="1414.0" cy="943.7" r="4"/><circle cx="1519.3" cy="954.7" r="4"/><circle cx="1624.5" cy="950.7" r="4"/><circle cx="1729.8" cy="962.0" r="4"/><circle cx="1835.1" cy="929.0" r="4"/></g>
  <g fill="#13a55d" stroke="#fff" stroke-width="1.5"><circle cx="361.3" cy="1005.9" r="4"/><circle cx="466.6" cy="980.7" r="4"/><circle cx="571.8" cy="988.1" r="4"/><circle cx="677.1" cy="1003.0" r="4"/><circle cx="782.4" cy="976.9" r="4"/><circle cx="887.7" cy="973.3" r="4"/><circle cx="992.9" cy="995.6" r="4"/><circle cx="1098.2" cy="1008.9" r="4"/><circle cx="1203.5" cy="988.1" r="4"/><circle cx="1308.7" cy="1004.3" r="4"/><circle cx="1414.0" cy="987.0" r="4"/><circle cx="1519.3" cy="994.0" r="4"/><circle cx="1624.5" cy="977.7" r="4"/><circle cx="1729.8" cy="962.0" r="4"/><circle cx="1835.1" cy="951.0" r="4"/></g>
  <circle cx="1695" cy="743.3" r="6" fill="#f4a52c"/>
  <circle cx="1769" cy="743.3" r="6" fill="#13a55d"/>
  <g font-family="Liberation Sans" font-size="12" fill="#373d3f"><text x="1704" y="749">Bookings</text><text x="1778" y="749">Subscriptions</text></g>
</svg>


</body></html>
